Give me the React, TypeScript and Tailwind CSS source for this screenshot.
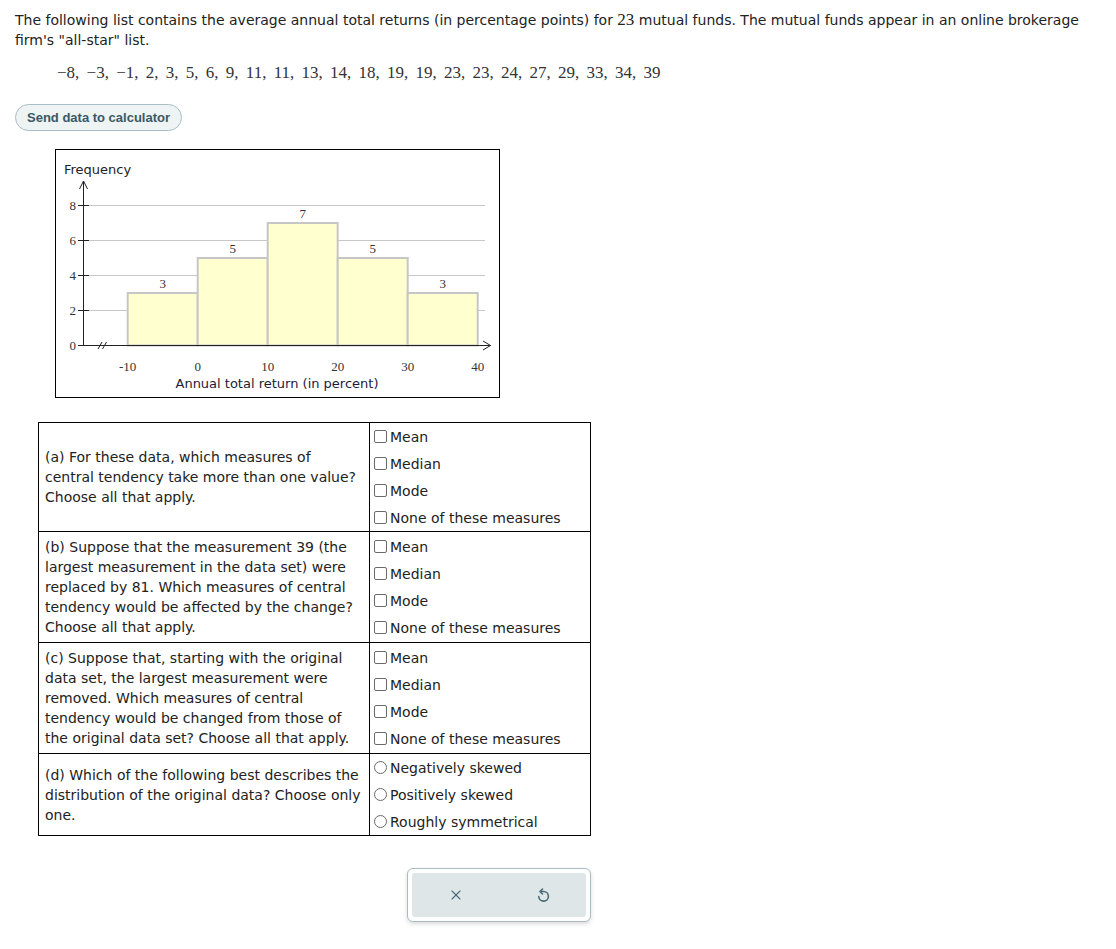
import { X } from "lucide-react";

const sans = "font-['Verdana','DejaVu_Sans',sans-serif]";
const serif = "font-['Liberation_Serif','Times_New_Roman',serif]";

const data = "−8, −3, −1, 2, 3, 5, 6, 9, 11, 11, 13, 14, 18, 19, 19, 23, 23, 24, 27, 29, 33, 34, 39";

const bars = [
  { from: -10, count: 3 },
  { from: 0, count: 5 },
  { from: 10, count: 7 },
  { from: 20, count: 5 },
  { from: 30, count: 3 },
];

const xOf = (v: number) => 141.7 + 7 * v;
const yOf = (f: number) => 195.5 - 17.5 * f;

function Histogram() {
  return (
    <div className="ml-[40px] mt-[18px] w-[445px] border border-black bg-white">
      <svg width="443" height="247" viewBox="0 0 443 247" className="block">
        <text x="8" y="24" fontSize="13" fill="#222" fontFamily="Verdana, 'DejaVu Sans', sans-serif">
          Frequency
        </text>
        {[2, 4, 6, 8].map((f) => (
          <line key={f} x1="27.5" x2="429" y1={yOf(f)} y2={yOf(f)} stroke="#c8c8c8" strokeWidth="1" />
        ))}
        {bars.map((b) => (
          <g key={b.from}>
            <rect
              x={xOf(b.from)}
              y={yOf(b.count)}
              width="70"
              height={17.5 * b.count}
              fill="#ffffcf"
              stroke="#c6c6c6"
              strokeWidth="2"
            />
            <text
              x={xOf(b.from) + 35}
              y={yOf(b.count) - 5}
              fontSize="13"
              textAnchor="middle"
              fill="#333"
              fontFamily="'Liberation Serif', serif"
            >
              {b.count}
            </text>
          </g>
        ))}
        {[0, 2, 4, 6, 8].map((f) => (
          <g key={f}>
            <line x1="22" x2="33" y1={yOf(f)} y2={yOf(f)} stroke="#222" strokeWidth="1" />
            <text x="20" y={yOf(f) + 4} fontSize="13" textAnchor="end" fill="#333" fontFamily="'Liberation Serif', serif">
              {f}
            </text>
          </g>
        ))}
        <line x1="27.5" x2="27.5" y1="195.5" y2="31" stroke="#222" strokeWidth="1" />
        <polyline points="23.5,39 27.5,31 31.5,39" fill="none" stroke="#222" strokeWidth="1" />
        <line x1="27.5" x2="434.5" y1="195.5" y2="195.5" stroke="#222" strokeWidth="1" />
        <polyline points="427,191 434.5,195.5 427,200" fill="none" stroke="#222" strokeWidth="1" />
        <line x1="42" y1="199" x2="46" y2="192" stroke="#222" strokeWidth="1" />
        <line x1="46.5" y1="199" x2="50.5" y2="192" stroke="#222" strokeWidth="1" />
        {[-10, 0, 10, 20, 30, 40].map((v) => (
          <text
            key={v}
            x={xOf(v)}
            y="221"
            fontSize="13"
            textAnchor="middle"
            fill="#333"
            fontFamily="'Liberation Serif', serif"
          >
            {v}
          </text>
        ))}
        <text
          x="221"
          y="238"
          fontSize="13"
          textAnchor="middle"
          fill="#1b1b3a"
          fontFamily="Verdana, 'DejaVu Sans', sans-serif"
        >
          Annual total return (in percent)
        </text>
      </svg>
    </div>
  );
}

function Box({ round }: { round?: boolean }) {
  return (
    <span
      className={`inline-block h-[13px] w-[13px] shrink-0 border border-[#6b6b6b] bg-white ${
        round ? "rounded-full" : "rounded-[2px]"
      }`}
    />
  );
}

function Options({ items, round }: { items: string[]; round?: boolean }) {
  return (
    <div className="flex flex-col">
      {items.map((item) => (
        <label key={item} className="flex h-[27px] items-center gap-[3px] pl-[4px]">
          <Box round={round} />
          <span>{item}</span>
        </label>
      ))}
    </div>
  );
}

const measures = ["Mean", "Median", "Mode", "None of these measures"];

const questions = [
  {
    text: "(a) For these data, which measures of central tendency take more than one value? Choose all that apply.",
    items: measures,
  },
  {
    text: "(b) Suppose that the measurement 39 (the largest measurement in the data set) were replaced by 81. Which measures of central tendency would be affected by the change? Choose all that apply.",
    items: measures,
    pad: true,
  },
  {
    text: "(c) Suppose that, starting with the original data set, the largest measurement were removed. Which measures of central tendency would be changed from those of the original data set? Choose all that apply.",
    items: measures,
    pad: true,
  },
  {
    text: "(d) Which of the following best describes the distribution of the original data? Choose only one.",
    items: ["Negatively skewed", "Positively skewed", "Roughly symmetrical"],
    round: true,
  },
];

function UndoIcon() {
  return (
    <svg width="16" height="16" viewBox="0 0 16 16" fill="none" stroke="#4b6b78" strokeWidth="1.6" strokeLinecap="round" strokeLinejoin="round">
      <path d="M5.5 4.5 H8.5 A4.8 4.8 0 1 1 3.8 9.5" />
      <path d="M7.5 2 L5 4.5 L7.5 7" />
    </svg>
  );
}

export default function App() {
  return (
    <div className={`${sans} min-h-[949px] bg-white px-[15px] pt-[10px] text-[14px] leading-[20px] text-[#222]`}>
      <p className="w-[1080px]">
        The following list contains the average annual total returns (in percentage points) for{" "}
        <span className={`${serif} text-[17px] leading-none`}>23</span> mutual funds. The mutual funds appear in an
        online brokerage firm's "all-star" list.
      </p>
      <p className={`${serif} mt-[13px] pl-[42px] text-[17px] leading-[20px] text-[#333] [word-spacing:3px]`}>{data}</p>
      <button className="mt-[21px] rounded-full border border-[#a8bcc4] bg-[#eef3f4] px-[11px] py-[2px] font-['Liberation_Sans',Arial,sans-serif] text-[13px] font-bold leading-[21px] text-[#3a5866]">
        Send data to calculator
      </button>
      <Histogram />
      <table className="ml-[23px] mt-[24px] border-collapse">
        <tbody>
          {questions.map((q) => (
            <tr key={q.text}>
              <td className="w-[331px] border border-black px-[6px] py-0 align-middle">{q.text}</td>
              <td className={`w-[221px] border border-black px-0 align-top ${q.pad ? "py-px" : "py-0"}`}>
                <Options items={q.items} round={q.round} />
              </td>
            </tr>
          ))}
        </tbody>
      </table>
      <div className="ml-[392px] mt-[32px] w-[184px] rounded-[6px] border border-[#a9bcc4] bg-white p-[4px] shadow-[0_2px_4px_rgba(0,0,0,0.15)]">
        <div className="flex h-[44px] items-center justify-around rounded-[3px] bg-[#dfe6e8]">
          <X size={16} strokeWidth={1.6} color="#4b6b78" />
          <UndoIcon />
        </div>
      </div>
    </div>
  );
}
